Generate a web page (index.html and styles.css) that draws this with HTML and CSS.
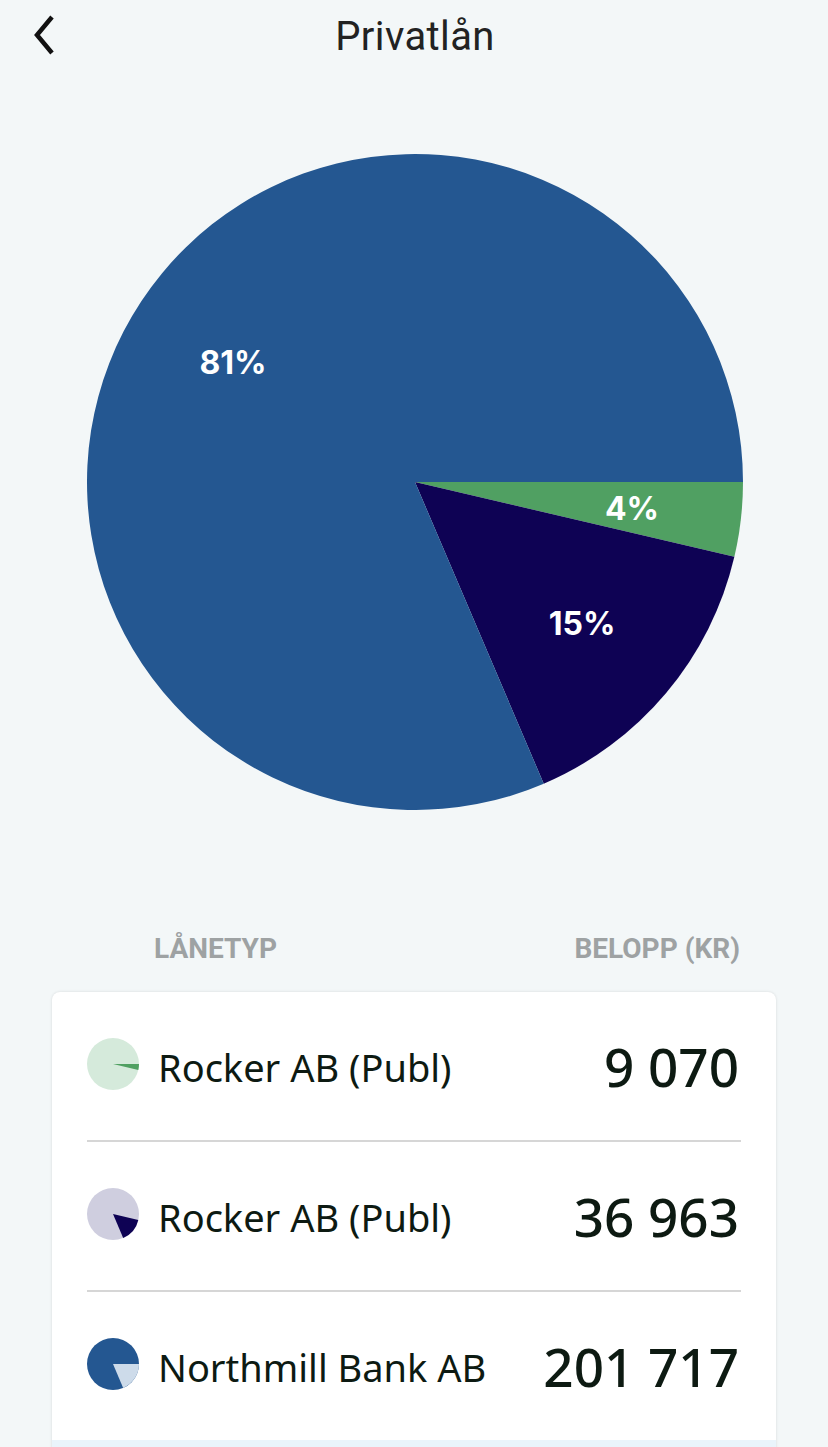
FILE: index.html
```html
<!DOCTYPE html>
<html>
<head>
<meta http-equiv="Content-Type" content="text/html; charset=utf-8"/>
<title>Privatlån</title>
<link rel="stylesheet" href="styles.css">
</head>

<body>

<div class="topbar">
  <a class="back" href="#">
    <svg width="26" height="40" viewBox="0 0 26 40"><path d="M21 2 L6 20 L21 38" fill="none" stroke="#111" stroke-width="4.5"/></svg>
  </a>
  <h1>Privatlån</h1>
</div>

<div class="chart">
  <svg width="656" height="656" viewBox="0 0 656 656">
    <path d="M328 328 L656 328 A328 328 0 0 1 647.36 402.79 Z" fill="#50a062"/>
    <path d="M328 328 L647.36 402.79 A328 328 0 0 1 456.74 629.68 Z" fill="#0e0254"/>
    <path d="M328 328 L456.74 629.68 A328 328 0 1 1 656 328 Z" fill="#245791"/>
    <text class="pct" x="146" y="208">81%</text>
    <text class="pct" x="545" y="354">4%</text>
    <text class="pct" x="495" y="469">15%</text>
  </svg>
</div>

<div class="colheads">
  <span>LÅNETYP</span>
  <span>BELOPP (KR)</span>
</div>

<div class="card">
  <div class="row">
    <div class="lender">
      <svg class="dot" width="52" height="52" viewBox="0 0 52 52">
        <circle cx="26" cy="26" r="26" fill="#d5eadb"/>
        <path d="M26 26 L52 26 A26 26 0 0 1 51.32 31.93 Z" fill="#50a062"/>
      </svg>
      <span>Rocker AB (Publ)</span>
    </div>
    <div class="amount">9 070</div>
  </div>
  <div class="row">
    <div class="lender">
      <svg class="dot" width="52" height="52" viewBox="0 0 52 52">
        <circle cx="26" cy="26" r="26" fill="#cfcedf"/>
        <path d="M26 26 L51.32 31.93 A26 26 0 0 1 36.20 49.91 Z" fill="#0e0254"/>
      </svg>
      <span>Rocker AB (Publ)</span>
    </div>
    <div class="amount">36 963</div>
  </div>
  <div class="row">
    <div class="lender">
      <svg class="dot" width="52" height="52" viewBox="0 0 52 52">
        <circle cx="26" cy="26" r="26" fill="#245791"/>
        <path d="M26 26 L52 26 A26 26 0 0 1 36.20 49.91 Z" fill="#cddbea"/>
      </svg>
      <span>Northmill Bank AB</span>
    </div>
    <div class="amount">201 717</div>
  </div>
  <div class="total"></div>
</div>

</body>
</html>
```

FILE: styles.css
```css
body {
   margin: 0;
   background-color: #f3f7f8;
   font-family: 'Noto Sans', sans-serif;
   color: #0d1a12;
}

.topbar {
   height: 72px;
   display: flex;
   align-items: center;
   justify-content: center;
   position: relative;
}

.back {
   position: absolute;
   left: 31px;
   top: 15px;
}

h1 {
   margin: 0 0 0 2px;
   font-family: Roboto, sans-serif;
   font-weight: 400;
   font-size: 40px;
   letter-spacing: 0.4px;
   color: #222;
}

.chart {
   display: flex;
   justify-content: center;
   padding: 82px 0 0 2px;
   height: 656px;
}

.pct {
   fill: #fff;
   font-family: Inter, sans-serif;
   font-weight: 700;
   font-size: 32px;
   text-anchor: middle;
   dominant-baseline: central;
}

.colheads {
   display: flex;
   justify-content: space-between;
   margin: 124px 88px 0 154px;
   font-family: Roboto, sans-serif;
   font-weight: 700;
   font-size: 28px;
   color: #9ea2a3;
   line-height: 30px;
}

.card {
   margin: 28px 52px 0 52px;
   padding: 0 35px;
   background-color: #fff;
   border-radius: 8px 8px 0 0;
   box-shadow: 0 0 3px rgba(0,0,0,0.12);
}

.row {
   height: 148px;
   display: flex;
   align-items: center;
   justify-content: space-between;
   border-bottom: 2px solid #d6d6d6;
}

.row:nth-child(3) {
   border-bottom: none;
}

.lender {
   display: flex;
   align-items: center;
   gap: 19px;
   font-size: 38px;
}

.lender span {
   margin-top: 2px;
}

.dot {
   flex: none;
   margin-top: -4px;
}

.amount {
   font-weight: 500;
   font-size: 53px;
   margin-right: 2px;
}

.total {
   height: 60px;
   margin: 0 -35px;
   background-color: #eaf4fb;
}
```
